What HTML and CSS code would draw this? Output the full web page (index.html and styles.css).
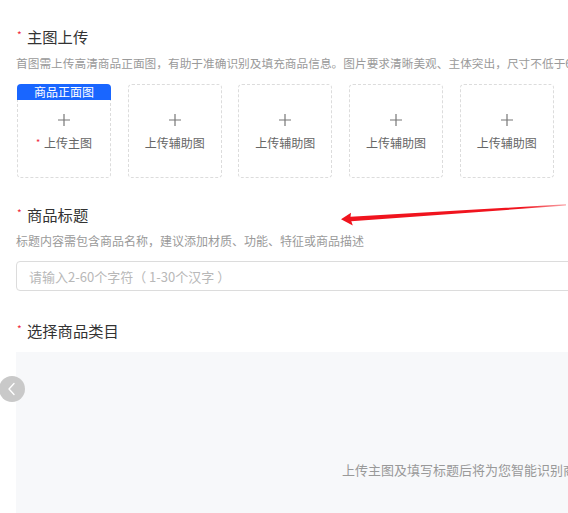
FILE: index.html
```html
<!DOCTYPE html>
<html lang="zh-CN">
<head>
<meta charset="utf-8">
<title>商品发布</title>
<link rel="stylesheet" href="styles.css">
</head>
<body>
<div class="page">
  <section class="block first">
    <h2 class="title"><span class="star">*</span>主图上传</h2>
    <p class="desc nowrap">首图需上传高清商品正面图，有助于准确识别及填充商品信息。图片要求清晰美观、主体突出，尺寸不低于600*600，背景为白色或浅色</p>
    <div class="cards">
      <div class="card main">
        <span class="tag">商品正面图</span>
        <svg class="plus" width="14" height="14" viewBox="0 0 14 14"><path d="M7 1v12M1 7h12" stroke="#777" stroke-width="1.2" fill="none"/></svg>
        <span class="label"><span class="star sm">*</span>上传主图</span>
      </div>
      <div class="card">
        <svg class="plus" width="14" height="14" viewBox="0 0 14 14"><path d="M7 1v12M1 7h12" stroke="#777" stroke-width="1.2" fill="none"/></svg>
        <span class="label">上传辅助图</span>
      </div>
      <div class="card">
        <svg class="plus" width="14" height="14" viewBox="0 0 14 14"><path d="M7 1v12M1 7h12" stroke="#777" stroke-width="1.2" fill="none"/></svg>
        <span class="label">上传辅助图</span>
      </div>
      <div class="card">
        <svg class="plus" width="14" height="14" viewBox="0 0 14 14"><path d="M7 1v12M1 7h12" stroke="#777" stroke-width="1.2" fill="none"/></svg>
        <span class="label">上传辅助图</span>
      </div>
      <div class="card">
        <svg class="plus" width="14" height="14" viewBox="0 0 14 14"><path d="M7 1v12M1 7h12" stroke="#777" stroke-width="1.2" fill="none"/></svg>
        <span class="label">上传辅助图</span>
      </div>
    </div>
  </section>

  <section class="block second">
    <h2 class="title"><span class="star">*</span>商品标题</h2>
    <p class="desc">标题内容需包含商品名称，建议添加材质、功能、特征或商品描述</p>
    <div class="input"><span class="placeholder">请输入2-60个字符（ 1-30个汉字 ）</span></div>
  </section>

  <section class="block third">
    <h2 class="title"><span class="star">*</span>选择商品类目</h2>
    <div class="category">
      <p class="hint">上传主图及填写标题后将为您智能识别商品类目</p>
    </div>
  </section>
</div>

<button class="prev" aria-label="上一步">
  <svg width="26" height="26" viewBox="0 0 26 26"><path d="M15 7.5 L10 13 L15 18.5" stroke="#fff" stroke-width="1.4" fill="none" stroke-linecap="round" stroke-linejoin="round"/></svg>
</button>

<svg class="annot" width="568" height="513" viewBox="0 0 568 513">
  <defs>
    <linearGradient id="fade" x1="341" y1="0" x2="568" y2="0" gradientUnits="userSpaceOnUse">
      <stop offset="0" stop-color="#f0141e"/>
      <stop offset="0.8" stop-color="#f0141e"/>
      <stop offset="1" stop-color="#f0141e" stop-opacity="0.35"/>
    </linearGradient>
  </defs>
  <polygon fill="url(#fade)" points="341,219.3 351,212.8 350.5,216.8 566,204.3 566,205.6 351.3,221.3 352.8,225.5"/>
</svg>
</body>
</html>
```

FILE: styles.css
```css
html, body {
  margin: 0;
  padding: 0;
  width: 568px;
  height: 513px;
  overflow: hidden;
  background: #fff;
}

body {
  position: relative;
  font-family: "Noto Sans CJK SC", "Noto Sans", sans-serif;
  color: #333;
  text-spacing-trim: space-all;
}

.page {
  padding-left: 16px;
  width: 925px;
}

.block.first { padding-top: 26px; }
.block.second { padding-top: 26px; }
.block.third { padding-top: 29px; }

.title {
  margin: 0;
  font-size: 15.3px;
  font-weight: 400;
  line-height: 20px;
  color: #333;
  display: flex;
  align-items: center;
}

.star {
  color: #f0283c;
  font-size: 10px;
  line-height: 10px;
  width: 10px;
  padding-left: 1px;
  margin-top: -2px;
}

.desc {
  margin: 9px 0 0;
  font-size: 12px;
  line-height: 16px;
  color: #9a9a9a;
}

.nowrap {
  white-space: nowrap;
  font-size: 11.7px;
}

.cards {
  display: flex;
  gap: 16.7px;
  margin-top: 13px;
  padding-left: 1px;
}

.card {
  position: relative;
  box-sizing: border-box;
  width: 94px;
  height: 94px;
  border: 1px dashed #dcdcdc;
  border-radius: 4px;
  display: flex;
  flex-direction: column;
  align-items: center;
  padding-top: 28px;
}

.card.main { border-top-left-radius: 5px; border-top-right-radius: 5px; }

.tag {
  position: absolute;
  top: -1px;
  left: -1px;
  right: -1px;
  height: 16px;
  background: #1966ff;
  color: #fff;
  font-size: 12px;
  line-height: 16px;
  text-align: center;
  border-radius: 4px 4px 0 0;
}

.plus { display: block; }

.label {
  margin-top: 8px;
  font-size: 12px;
  line-height: 16px;
  color: #666;
  display: flex;
  align-items: center;
}

.star.sm {
  width: 8px;
  font-size: 9px;
  padding: 0;
  margin-top: -1px;
}

.input {
  box-sizing: border-box;
  margin-top: 12px;
  height: 30px;
  border: 1px solid #dcdcdc;
  border-radius: 4px;
  padding-left: 12px;
  display: flex;
  align-items: center;
}

.placeholder {
  font-size: 13px;
  color: #b8b8b8;
  white-space: pre;
}

.category {
  margin-top: 12px;
  height: 240px;
  background: #f7f8fa;
  padding-top: 110px;
  box-sizing: border-box;
}

.hint {
  margin: 0;
  text-align: center;
  font-size: 13px;
  line-height: 16px;
  color: #999;
}

.prev {
  position: absolute;
  left: -1px;
  top: 376px;
  width: 26px;
  height: 26px;
  border-radius: 50%;
  border: none;
  padding: 0;
  background: #c9c9c9;
  display: flex;
  align-items: center;
  justify-content: center;
}

.prev svg { display: block; }

.annot {
  position: absolute;
  left: 0;
  top: 0;
  pointer-events: none;
}
```
